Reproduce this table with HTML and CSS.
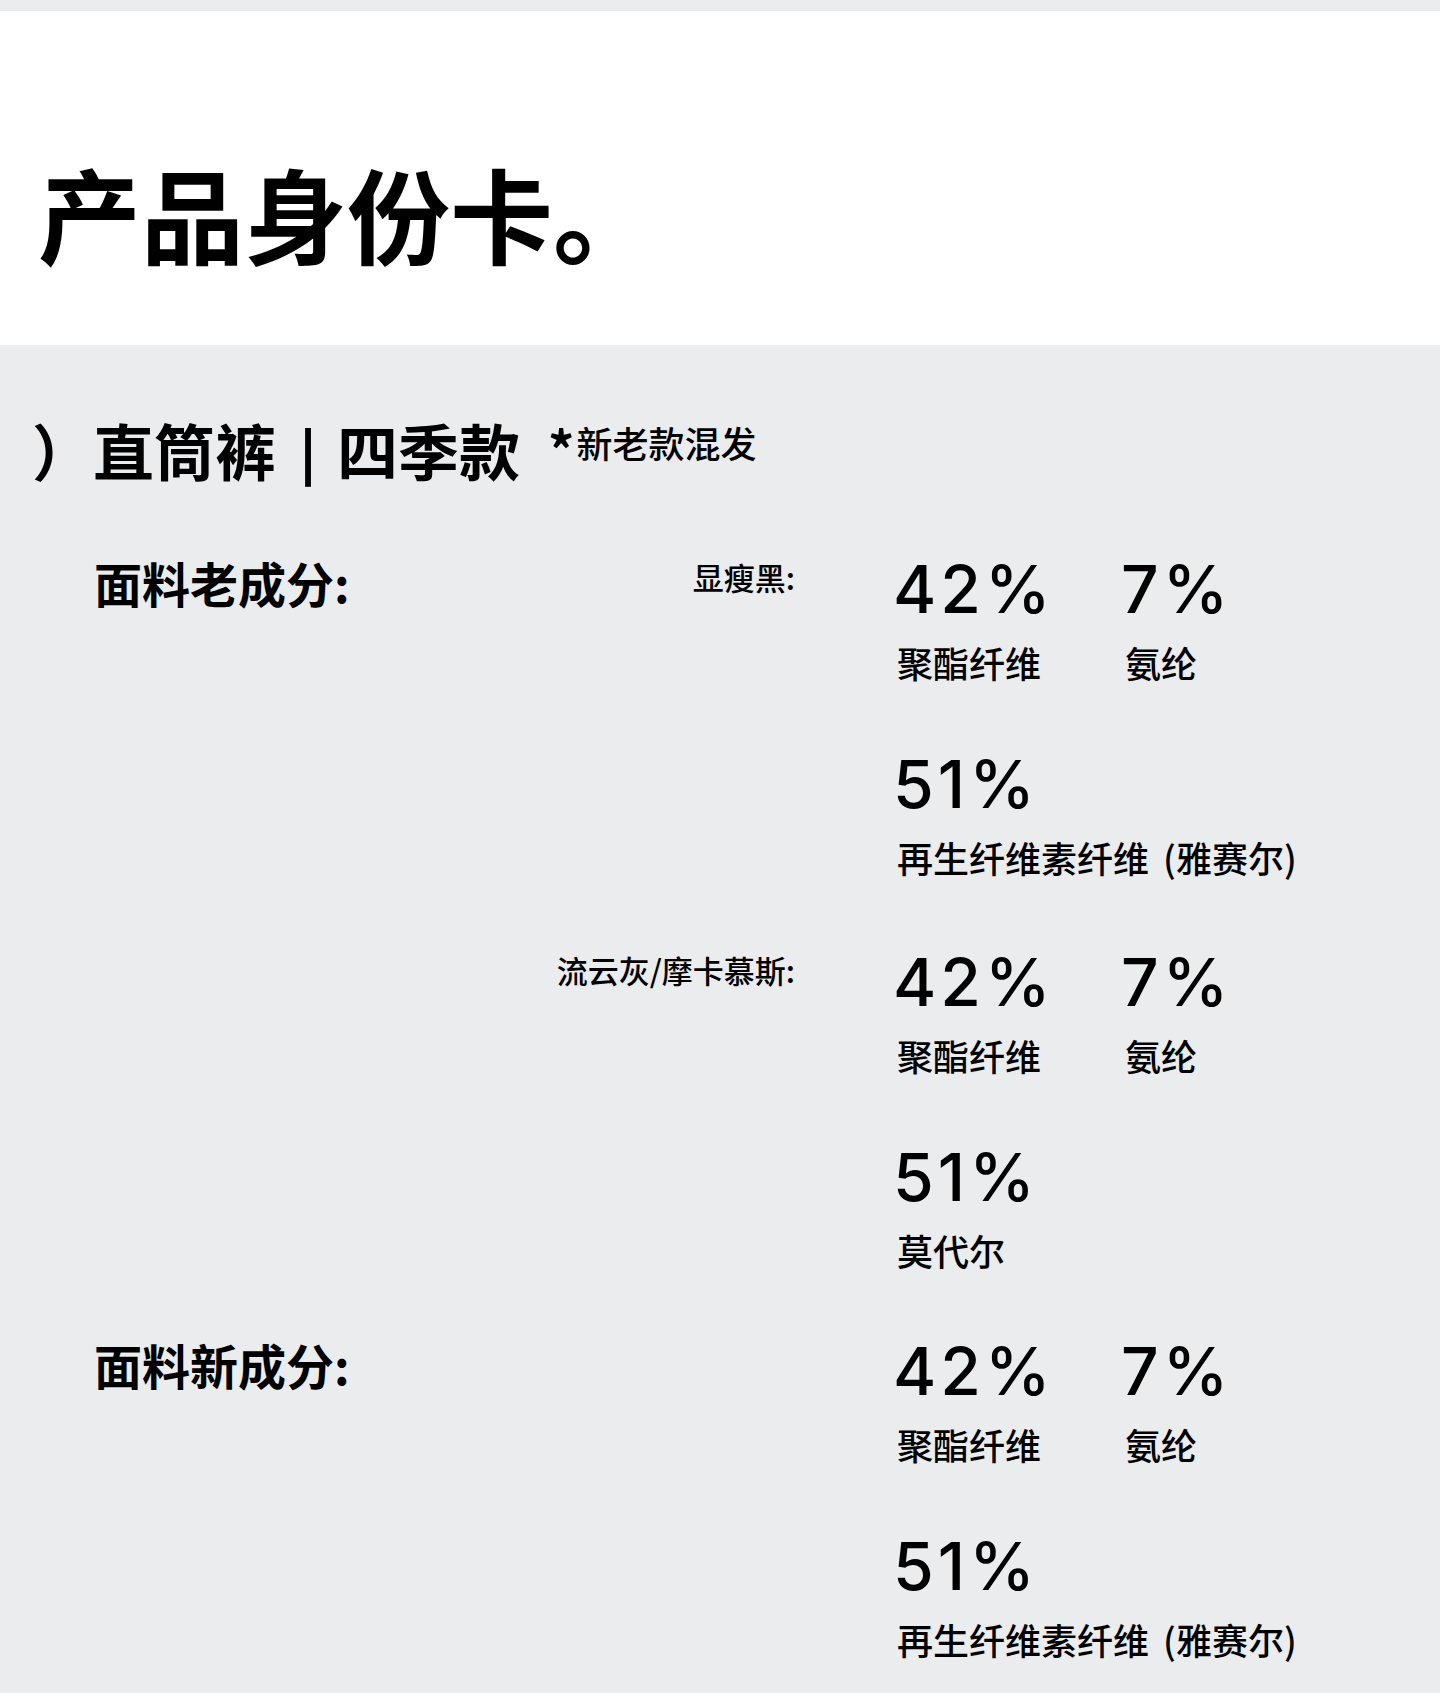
FILE: index.html
```html
<!DOCTYPE html>
<html lang="zh-CN">
<head>
<meta charset="utf-8">
<title>产品身份卡</title>
<link rel="stylesheet" href="styles.css">
</head>
<body>
<header class="hero">
  <h1 class="hero-title">产品身份卡。</h1>
</header>
<main class="spec">
  <div class="spec-head">
    <h2 class="spec-name"><span class="paren">）</span>直筒裤<span class="sep">|</span>四季款</h2>
    <span class="spec-note"><span class="star">*</span>新老款混发</span>
  </div>

  <section class="fabric">
    <h3 class="fabric-title">面料老成分:</h3>
    <div class="variants">
      <div class="variant">
        <div class="variant-name">显瘦黑:</div>
        <ul class="comp-grid">
          <li class="comp"><span class="comp-pct">42%</span><span class="comp-name">聚酯纤维</span></li>
          <li class="comp"><span class="comp-pct">7%</span><span class="comp-name">氨纶</span></li>
          <li class="comp"><span class="comp-pct">51%</span><span class="comp-name">再生纤维素纤维 (雅赛尔)</span></li>
        </ul>
      </div>
      <div class="variant">
        <div class="variant-name">流云灰/摩卡慕斯:</div>
        <ul class="comp-grid">
          <li class="comp"><span class="comp-pct">42%</span><span class="comp-name">聚酯纤维</span></li>
          <li class="comp"><span class="comp-pct">7%</span><span class="comp-name">氨纶</span></li>
          <li class="comp"><span class="comp-pct">51%</span><span class="comp-name">莫代尔</span></li>
        </ul>
      </div>
    </div>
  </section>

  <section class="fabric fabric-new">
    <h3 class="fabric-title">面料新成分:</h3>
    <div class="variants">
      <div class="variant">
        <div class="variant-name"></div>
        <ul class="comp-grid">
          <li class="comp"><span class="comp-pct">42%</span><span class="comp-name">聚酯纤维</span></li>
          <li class="comp"><span class="comp-pct">7%</span><span class="comp-name">氨纶</span></li>
          <li class="comp"><span class="comp-pct">51%</span><span class="comp-name">再生纤维素纤维 (雅赛尔)</span></li>
        </ul>
      </div>
    </div>
  </section>
</main>
</body>
</html>
```

FILE: styles.css
```css
html, body {
  margin: 0;
  padding: 0;
}

body {
  background: #ebecee;
  color: #000;
  font-family: "Noto Sans CJK SC", "Noto Sans", sans-serif;
}

.hero {
  background: #fff;
  margin-top: 11px;
  height: 334px;
  box-sizing: border-box;
  padding: 150px 0 0 38px;
}

.hero-title {
  margin: 0;
  font-size: 103px;
  line-height: 103px;
  font-weight: 700;
}

.spec {
  padding: 74px 0 36px 32px;
}

.spec-head {
  display: flex;
  align-items: flex-start;
}

.spec-name {
  margin: 0;
  font-size: 61px;
  line-height: 61px;
  font-weight: 700;
  white-space: nowrap;
}

.paren {
  font-weight: 600;
}

.sep {
  display: inline-block;
  margin: 0 20px 0 23px;
  transform: scaleY(0.85);
}

.spec-note {
  margin: 5px 0 0 28px;
  font-size: 36px;
  line-height: 36px;
  font-weight: 500;
  white-space: nowrap;
}

.star {
  font-size: 52px;
  font-weight: 700;
  vertical-align: -12px;
  line-height: 36px;
  margin-right: 2px;
}

.fabric {
  display: flex;
  align-items: flex-start;
  margin-top: 76px;
  padding-left: 62px;
}

.fabric-new {
  margin-top: 70px;
}

.fabric-title {
  width: 300px;
  flex: none;
  margin: 2px 0 0;
  font-size: 48px;
  line-height: 48px;
  font-weight: 700;
  white-space: nowrap;
}

.variants {
  display: flex;
  flex-direction: column;
  gap: 74px;
}

.variant {
  display: flex;
  align-items: flex-start;
}

.variant-name {
  width: 401px;
  flex: none;
  margin-top: 5px;
  text-align: right;
  font-size: 31px;
  line-height: 31px;
  font-weight: 500;
  white-space: nowrap;
}

.comp-grid {
  display: grid;
  grid-template-columns: 228px 228px;
  row-gap: 71px;
  margin: 0 0 0 98px;
  padding: 0;
  list-style: none;
}

.comp {
  display: flex;
  flex-direction: column;
}

.comp-pct {
  font-family: "Inter", "Noto Sans", sans-serif;
  font-size: 66px;
  line-height: 66px;
  font-weight: 500;
  letter-spacing: 4px;
}

.comp-name {
  margin-top: 22px;
  padding-left: 4px;
  font-size: 36px;
  line-height: 36px;
  font-weight: 500;
  white-space: nowrap;
  word-spacing: 6px;
}
```
